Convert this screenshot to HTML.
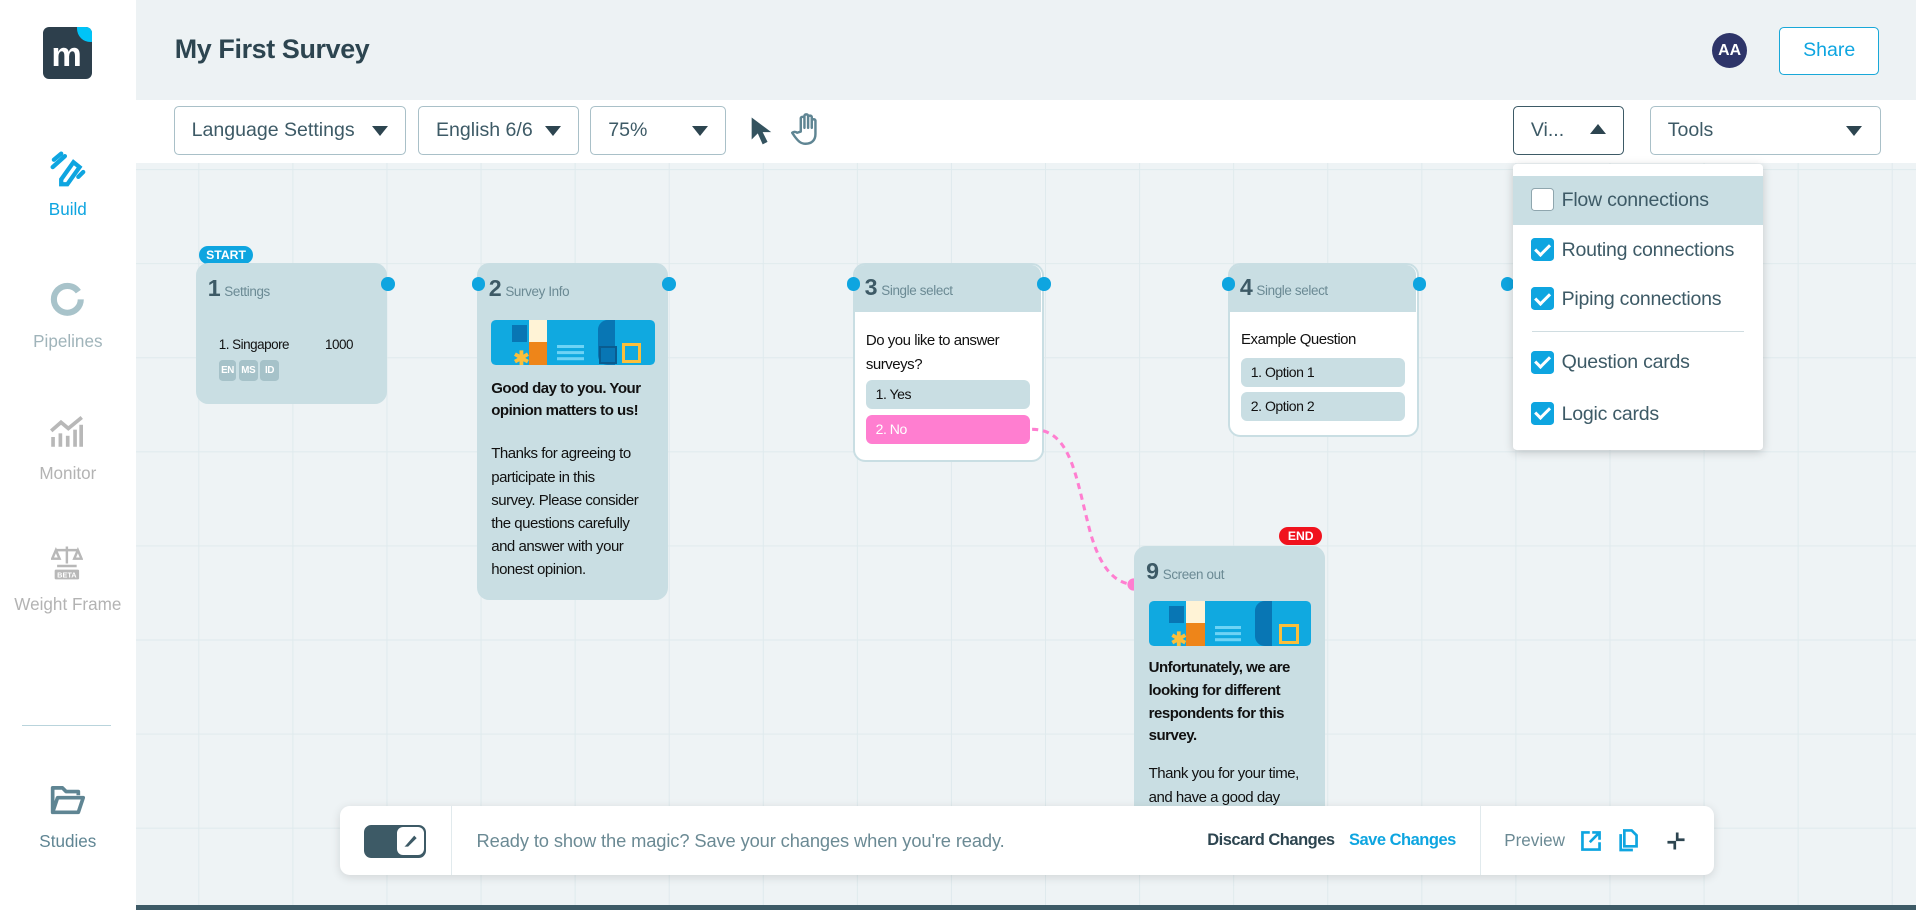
<!DOCTYPE html>
<html><head><meta charset="utf-8"><style>
html,body{margin:0;padding:0;overflow:hidden;}
body{width:1568px;height:745px;zoom:1.22194;position:relative;font-family:"Liberation Sans",sans-serif;background:#eef3f5;}
.abs{position:absolute;}
.side{left:0;top:0;width:111px;height:745px;background:#fff;}
.nav{position:absolute;left:0;width:111px;text-align:center;font-size:14px;}
.top{left:111px;top:0;width:1457px;height:82px;background:#edf2f4;}
.tb{left:111px;top:82px;width:1457px;height:51px;background:#fff;}
.dd{position:absolute;top:87px;height:40px;border:1px solid #a9c0c8;border-radius:4px;background:#fff;font-size:16px;color:#3d5a66;line-height:38px;box-sizing:border-box;padding-left:14px;}
.dd .tri{position:absolute;right:14px;top:15px;width:0;height:0;border-left:7px solid transparent;border-right:7px solid transparent;border-top:9px solid #2d4550;}
.grid{left:111px;top:133px;width:1457px;height:612px;background-image:linear-gradient(#dfeaed 1px,transparent 1px),linear-gradient(90deg,#dfeaed 1px,transparent 1px);background-size:77px 77px;background-position:51px 5px;}
.card{position:absolute;background:#c9dee3;border-radius:10px;font-size:12.5px;color:#111;}
.ct{letter-spacing:-0.4px;font-size:12.3px;}
.hd{position:absolute;left:10px;top:10px;font-size:19px;font-weight:bold;color:#3d5a66;}
.hd span{font-size:11px;font-weight:normal;color:#6b8a94;margin-left:3px;letter-spacing:-0.3px;}
.dot{position:absolute;width:11px;height:11px;border-radius:50%;background:#0ea5e0;}
.opt{position:absolute;left:10px;width:134px;height:24px;border-radius:5px;background:#c9dee3;font-size:11.5px;line-height:24px;padding-left:8px;box-sizing:border-box;}
.menu{left:1238px;top:134px;width:205px;height:234px;background:#fff;border-radius:3px;box-shadow:0 2px 8px rgba(0,0,0,.18);}
.mi{position:absolute;left:0;width:205px;height:40px;font-size:16px;color:#3d5a66;line-height:40px;padding-left:40px;box-sizing:border-box;letter-spacing:-0.2px;}
.cb{position:absolute;left:15px;top:10px;width:19px;height:19px;border-radius:3px;background:#0ea5e0;}
.cb:after{content:"";position:absolute;left:6px;top:2px;width:5px;height:10px;border:solid #fff;border-width:0 2.5px 2.5px 0;transform:rotate(45deg);}
.img{position:absolute;height:37px;border-radius:4px;background:#10a9e0;overflow:hidden;}
</style></head><body>
<div class="abs side">
  <div class="abs" style="left:35px;top:22px;width:40px;height:43px;border-radius:5px;background:#2d3f4c;overflow:hidden">
    <div class="abs" style="right:-10px;top:-10px;width:22px;height:22px;border-radius:50%;background:#00c3f7"></div>
    <div class="abs" style="left:7px;top:9px;color:#fff;font-weight:bold;font-size:28px;line-height:28px">m</div>
  </div>
  <svg class="abs" style="left:40px;top:123px" width="30" height="30" viewBox="0 0 30 30"><g fill="none" stroke="#0ea5e0" stroke-width="3.5" stroke-linecap="round"><path d="M4 8 L10 3 M3 14 L13 5"/><path d="M10 24 L20 10 L25 14 L15 28 L10 28 Z"/><path d="M24 22 L28 18"/></g></svg>
  <div class="nav" style="top:164px;color:#0ea5e0">Build</div>
  <svg class="abs" style="left:40px;top:230px" width="30" height="30"><circle cx="15" cy="15" r="11" fill="none" stroke="#a8c3ca" stroke-width="5" stroke-dasharray="62 7"/></svg>
  <div class="nav" style="top:272px;color:#a0b4ba">Pipelines</div>
  <svg class="abs" style="left:41px;top:340px" width="28" height="28"><g fill="#b8b8b8"><rect x="1" y="18" width="3" height="8"/><rect x="7" y="15" width="3" height="11"/><rect x="13" y="17" width="3" height="9"/><rect x="19" y="12" width="3" height="14"/><rect x="24" y="8" width="3" height="18"/></g><path d="M1 13 L9 6 L15 11 L26 2" stroke="#b8b8b8" stroke-width="3" fill="none"/></svg>
  <div class="nav" style="top:380px;color:#b3b3b3">Monitor</div>
  <svg class="abs" style="left:42px;top:445px" width="26" height="30"><g fill="none" stroke="#b8b8b8" stroke-width="2"><path d="M13 2 V16 M4 5 H22 M4 5 L1 12 H7 Z M22 5 L19 12 H25 Z M5 18 H21"/></g><rect x="3" y="21" width="20" height="8" rx="1" fill="#b8b8b8"/><text x="13" y="27.5" font-size="6" fill="#fff" text-anchor="middle" font-family="Liberation Sans" font-weight="bold">BETA</text></svg>
  <div class="nav" style="top:487px;color:#b3b3b3">Weight Frame</div>
  <div class="abs" style="left:18px;top:593px;width:73px;height:1px;background:#b9d4dc"></div>
  <svg class="abs" style="left:40px;top:641px" width="30" height="28"><path d="M3 24 V4 H11 L14 7 H24 V10 M3 24 L7 12 H28 L24 24 Z" fill="none" stroke="#5f8593" stroke-width="3" stroke-linejoin="round"/></svg>
  <div class="nav" style="top:681px;color:#5f8593">Studies</div>
</div>
<div class="abs top">
  <div class="abs" style="left:32px;top:28px;font-size:22px;font-weight:bold;color:#2d4550;letter-spacing:-0.3px">My First Survey</div>
  <div class="abs" style="left:1290px;top:27px;width:29px;height:29px;border-radius:50%;background:#2e3569;color:#fff;font-size:13px;font-weight:bold;text-align:center;line-height:29px">AA</div>
  <div class="abs" style="left:1345px;top:22px;width:82px;height:39px;border:1px solid #19a8d8;border-radius:4px;box-sizing:border-box;background:#fff;color:#0ea5e0;font-size:16px;text-align:center;line-height:37px">Share</div>
</div>
<div class="abs tb"></div>
<div class="dd" style="left:142px;width:190px">Language Settings<div class="tri"></div></div>
<div class="dd" style="left:342px;width:132px">English 6/6<div class="tri"></div></div>
<div class="dd" style="left:483px;width:111px">75%<div class="tri"></div></div>
<svg class="abs" style="left:612px;top:94px" width="22" height="26"><path d="M3 2 L3 20 L8 15 L12 24 L16 22 L12 14 L19 14 Z" fill="#34535f"/></svg>
<svg class="abs" style="left:647px;top:92px" width="26" height="28"><path d="M8 16 V5 a1.6 1.6 0 0 1 3 0 V13 V3 a1.6 1.6 0 0 1 3 0 V13 V4 a1.6 1.6 0 0 1 3 0 V13 V7 a1.6 1.6 0 0 1 3 0 V18 c0 5 -3 8 -8 8 c-4 0 -6 -2 -9 -6 l-2 -3 c1 -1 3 -1 4 0 Z" fill="none" stroke="#5f8593" stroke-width="2" stroke-linejoin="round"/></svg>
<div class="dd" style="left:1238px;width:91px;border-color:#3d5a66">Vi...<div class="tri" style="border-top:none;border-bottom:9px solid #2d4550;top:14px"></div></div>
<div class="dd" style="left:1350px;width:189px">Tools<div class="tri"></div></div>

<div class="abs grid"></div>

<!-- card 1 -->
<div class="abs" style="left:163px;top:201px;width:44px;height:15px;border-radius:8px;background:#0ea5e0;color:#fff;font-size:10px;font-weight:bold;text-align:center;line-height:15px">START</div>
<div class="card" style="left:160px;top:215px;width:157px;height:116px">
  <div class="hd">1<span>Settings</span></div>
  <div class="abs ct" style="left:19px;top:61px;font-size:11px">1. Singapore</div>
  <div class="abs ct" style="left:106px;top:61px;font-size:11px">1000</div>
  <div class="abs" style="left:19px;top:80px;font-size:8px;color:#fff;font-weight:bold;letter-spacing:-0.3px">
    <span style="display:inline-block;background:#a6c2c9;border-radius:3px;padding:4px 2px;margin-right:2px">EN</span><span style="display:inline-block;background:#a6c2c9;border-radius:3px;padding:4px 2px;margin-right:2px">MS</span><span style="display:inline-block;background:#a6c2c9;border-radius:3px;padding:4px 4px">ID</span>
  </div>
</div>
<div class="dot" style="left:312px;top:227px"></div>

<!-- card 2 -->
<div class="card" style="left:390px;top:215px;width:157px;height:276px">
  <div class="hd">2<span>Survey Info</span></div>
  <div class="img" style="left:12px;top:47px;width:134px">
    <div class="abs" style="left:17px;top:4px;width:12px;height:14px;background:#0876b4"></div>
    <div class="abs" style="left:31px;top:0;width:15px;height:18px;background:#fff3d6"></div>
    <div class="abs" style="left:31px;top:18px;width:15px;height:19px;background:#ee8519"></div>
    <div class="abs" style="left:18px;top:22px;color:#fbbf3b;font-size:16px;font-weight:bold">✱</div>
    <div class="abs" style="left:54px;top:20px;width:22px;height:3px;background:#6ed3f5;box-shadow:0 5px 0 #6ed3f5,0 10px 0 #6ed3f5"></div>
    <div class="abs" style="left:87px;top:0;width:14px;height:37px;background:#0876b4;border-radius:8px 0 0 8px"></div>
    <div class="abs" style="left:88px;top:21px;width:12px;height:12px;border:2px solid #0a5c8f"></div>
    <div class="abs" style="left:107px;top:19px;width:11px;height:11px;border:3px solid #fbbf3b"></div>
  </div>
  <div class="abs ct" style="left:12px;top:94px;width:136px;font-weight:bold;line-height:18.5px">Good day to you. Your opinion matters to us!</div>
  <div class="abs ct" style="left:12px;top:147px;white-space:nowrap;line-height:19px">Thanks for agreeing to<br>participate in this<br>survey. Please consider<br>the questions carefully<br>and answer with your<br>honest opinion.</div>
</div>
<div class="dot" style="left:386px;top:227px"></div>
<div class="dot" style="left:542px;top:227px"></div>

<!-- card 3 -->
<div class="card" style="left:698px;top:215px;width:156px;height:163px;background:#fff;border:2px solid #c9dee3;box-sizing:border-box">
  <div class="abs" style="left:0;top:0;width:152px;height:39px;background:#c9dee3;border-radius:8px 8px 0 0"></div>
  <div class="hd" style="top:8px;left:8px">3<span>Single select</span></div>
  <div class="abs ct" style="left:9px;top:53px;width:125px;line-height:19px">Do you like to answer surveys?</div>
  <div class="opt ct" style="top:94px;left:9px;font-size:11.5px">1. Yes</div>
  <div class="opt ct" style="top:123px;left:9px;background:#ff7ed0;color:#fff;font-size:11.5px">2. No</div>
</div>
<div class="dot" style="left:693px;top:227px"></div>
<div class="dot" style="left:849px;top:227px"></div>

<!-- card 4 -->
<div class="card" style="left:1005px;top:215px;width:156px;height:143px;background:#fff;border:2px solid #c9dee3;box-sizing:border-box">
  <div class="abs" style="left:0;top:0;width:152px;height:39px;background:#c9dee3;border-radius:8px 8px 0 0"></div>
  <div class="hd" style="top:8px;left:8px">4<span>Single select</span></div>
  <div class="abs ct" style="left:9px;top:54px">Example Question</div>
  <div class="opt ct" style="top:76px;left:9px;font-size:11.5px">1. Option 1</div>
  <div class="opt ct" style="top:104px;left:9px;font-size:11.5px">2. Option 2</div>
</div>
<div class="dot" style="left:1000px;top:227px"></div>
<div class="dot" style="left:1156px;top:227px"></div>
<div class="dot" style="left:1228px;top:227px"></div>

<!-- connection -->
<svg class="abs" style="left:840px;top:345px" width="100" height="140"><path d="M5 6 C35 6 40 40 50 80 C58 115 70 132 88 133" fill="none" stroke="#ff7ed0" stroke-width="2.5" stroke-dasharray="5 4"/><circle cx="88" cy="133" r="5" fill="#ff7ed0"/></svg>

<!-- card 9 -->
<div class="abs" style="left:1047px;top:431px;width:35px;height:15px;border-radius:8px;background:#f0121d;color:#fff;font-size:10px;font-weight:bold;text-align:center;line-height:15px">END</div>
<div class="card" style="left:928px;top:447px;width:156px;height:230px;border-radius:10px 10px 0 0">
  <div class="hd">9<span>Screen out</span></div>
  <div class="img" style="left:12px;top:45px;width:133px">
    <div class="abs" style="left:17px;top:4px;width:12px;height:14px;background:#0876b4"></div>
    <div class="abs" style="left:31px;top:0;width:15px;height:18px;background:#fff3d6"></div>
    <div class="abs" style="left:31px;top:18px;width:15px;height:19px;background:#ee8519"></div>
    <div class="abs" style="left:18px;top:22px;color:#fbbf3b;font-size:16px;font-weight:bold">✱</div>
    <div class="abs" style="left:54px;top:20px;width:22px;height:3px;background:#6ed3f5;box-shadow:0 5px 0 #6ed3f5,0 10px 0 #6ed3f5"></div>
    <div class="abs" style="left:87px;top:0;width:14px;height:37px;background:#0876b4;border-radius:8px 0 0 8px"></div>
    <div class="abs" style="left:107px;top:19px;width:11px;height:11px;border:3px solid #fbbf3b"></div>
  </div>
  <div class="abs ct" style="left:12px;top:91px;width:136px;font-weight:bold;line-height:18.5px">Unfortunately, we are looking for different respondents for this survey.</div>
  <div class="abs ct" style="left:12px;top:177px;width:140px;line-height:19px">Thank you for your time, and have a good day</div>
</div>

<!-- menu -->
<div class="abs menu">
  <div class="mi" style="top:10px;background:#c9dee3"><div class="abs" style="left:15px;top:10px;width:17px;height:17px;border:1px solid #8fa6ae;border-radius:3px;background:#fff"></div>Flow connections</div>
  <div class="mi" style="top:51px"><div class="cb"></div>Routing connections</div>
  <div class="mi" style="top:91px"><div class="cb"></div>Piping connections</div>
  <div class="abs" style="left:16px;top:137px;width:173px;height:1px;background:#d0dde1"></div>
  <div class="mi" style="top:143px"><div class="cb"></div>Question cards</div>
  <div class="mi" style="top:185px"><div class="cb"></div>Logic cards</div>
</div>

<!-- bottom bar -->
<div class="abs" style="left:278px;top:660px;width:1125px;height:56px;background:#fff;border-radius:8px;box-shadow:0 2px 8px rgba(0,0,0,.12)">
  <div class="abs" style="left:20px;top:15px;width:51px;height:27px;border-radius:6px;background:#3d5a66"></div>
  <div class="abs" style="left:47px;top:17px;width:22px;height:23px;border-radius:5px;background:#fff"></div>
  <svg class="abs" style="left:51px;top:21px" width="14" height="14"><path d="M3 11 L10 3 L12 5 L5 12 L2 12 Z" fill="#3d5a66"/></svg>
  <div class="abs" style="left:91px;top:0;width:1px;height:56px;background:#e1eaed"></div>
  <div class="abs" style="left:112px;top:19px;font-size:15px;color:#6b8a94;letter-spacing:-0.1px">Ready to show the magic? Save your changes when you're ready.</div>
  <div class="abs" style="left:710px;top:20px;font-size:13.5px;font-weight:bold;color:#2d4550;letter-spacing:-0.4px">Discard Changes</div>
  <div class="abs" style="left:826px;top:20px;font-size:13.5px;font-weight:bold;color:#0ea5e0;letter-spacing:-0.4px">Save Changes</div>
  <div class="abs" style="left:933px;top:0;width:1px;height:56px;background:#e1eaed"></div>
  <div class="abs" style="left:953px;top:20px;font-size:14px;color:#6b8a94">Preview</div>
  <svg class="abs" style="left:1015px;top:19px" width="18" height="18"><path d="M8 2 H2 V16 H16 V10 M10 2 H16 V8 M16 2 L8 10" fill="none" stroke="#0ea5e0" stroke-width="2.2"/></svg>
  <svg class="abs" style="left:1045px;top:18px" width="18" height="20"><path d="M6 2 H12 L16 6 V15 H6 Z M3 5 V18 H13" fill="none" stroke="#0ea5e0" stroke-width="2.2"/></svg>
  <svg class="abs" style="left:1085px;top:19px" width="18" height="18"><path d="M2 10 H8 V16 M16 8 H10 V2" fill="none" stroke="#2d4550" stroke-width="2.2"/></svg>
</div>
<div class="abs" style="left:111px;top:741px;width:1457px;height:4px;background:#3d5a66"></div>
</body></html>
